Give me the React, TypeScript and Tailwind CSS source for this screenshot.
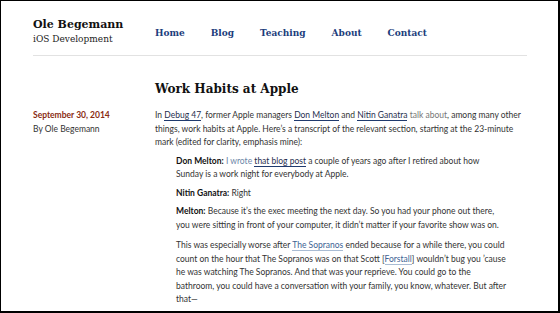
import React from "react";

const slab = "font-['DejaVu_Serif',serif]";
const sans = "font-['Lato','Noto_Sans',sans-serif]";

const navItems = ["Home", "Blog", "Teaching", "About", "Contact"];

const Link: React.FC<{ children: React.ReactNode; faint?: boolean }> = ({ children, faint }) =>
  faint ? (
    <a className="text-[#3d6394] border-b border-[#a9bcd4]">{children}</a>
  ) : (
    <a className="text-[#1f2f4f] border-b border-[#1f3a6e]">{children}</a>
  );

const App: React.FC = () => {
  return (
    <div className="w-[560px] h-[313px] overflow-hidden bg-white border-t border-l border-r-2 border-b-2 border-black">
      <div className="pl-[32px] pr-[31px]">
        {/* Header */}
        <header className="flex pt-[17px] pb-[9px] border-b border-[#e2e2e2]">
          <div className="w-[122px] shrink-0">
            <div className={`${slab} text-[11px] font-bold text-[#111] leading-[14px]`}>Ole Begemann</div>
            <div className={`${slab} text-[9px] text-[#222] leading-[14px]`}>iOS Development</div>
          </div>
          <nav className="flex gap-[26px] pt-[8px]">
            {navItems.map((item) => (
              <a key={item} className={`${slab} text-[9px] font-bold text-[#1c3d7c] leading-[14px]`}>
                {item}
              </a>
            ))}
          </nav>
        </header>

        {/* Post */}
        <div className="flex pt-[25px]">
          <div className="w-[122px] shrink-0" />
          <h1 className={`${slab} text-[12px] font-bold text-[#111] leading-[16px]`}>Work Habits at Apple</h1>
        </div>

        <div className={`flex pt-[12px] ${sans} text-[8.5px] leading-[13.5px] text-[#333]`}>
          <div className="w-[122px] shrink-0">
            <div className="font-bold text-[#8a2c12]">September 30, 2014</div>
            <div>By Ole Begemann</div>
          </div>
          <article className="flex-1">
            <p>
              In <Link>Debug 47</Link>, former Apple managers <Link>Don Melton</Link> and <Link>Nitin Ganatra</Link>{" "}
              <span className="text-[#777]">talk about</span>, among many other things, work habits at Apple. Here’s a
              transcript of the relevant section, starting at the 23-minute mark (edited for clarity, emphasis mine):
            </p>
            <blockquote className="pl-[21px] pr-[20px] mt-[5px]">
              <p>
                <strong className="text-[#111]">Don Melton:</strong> <span className="text-[#6c86a8]">I wrote</span>{" "}
                <Link>that blog post</Link> a couple of years ago after I retired about how Sunday is a work night for
                everybody at Apple.
              </p>
              <p className="mt-[5px]">
                <strong className="text-[#111]">Nitin Ganatra:</strong> Right
              </p>
              <p className="mt-[5px]">
                <strong className="text-[#111]">Melton:</strong> Because it’s the exec meeting the next day. So you had
                your phone out there, you were sitting in front of your computer, it didn’t matter if your favorite show
                was on.
              </p>
              <p className="mt-[7px]">
                This was especially worse after <Link faint>The Sopranos</Link> ended because for a while there, you
                could count on the hour that The Sopranos was on that Scott [<Link faint>Forstall</Link>] wouldn’t bug
                you ’cause he was watching The Sopranos. And that was your reprieve. You could go to the bathroom, you
                could have a conversation with your family, you know, whatever. But after that—
              </p>
            </blockquote>
          </article>
        </div>
      </div>
    </div>
  );
};

export default App;
